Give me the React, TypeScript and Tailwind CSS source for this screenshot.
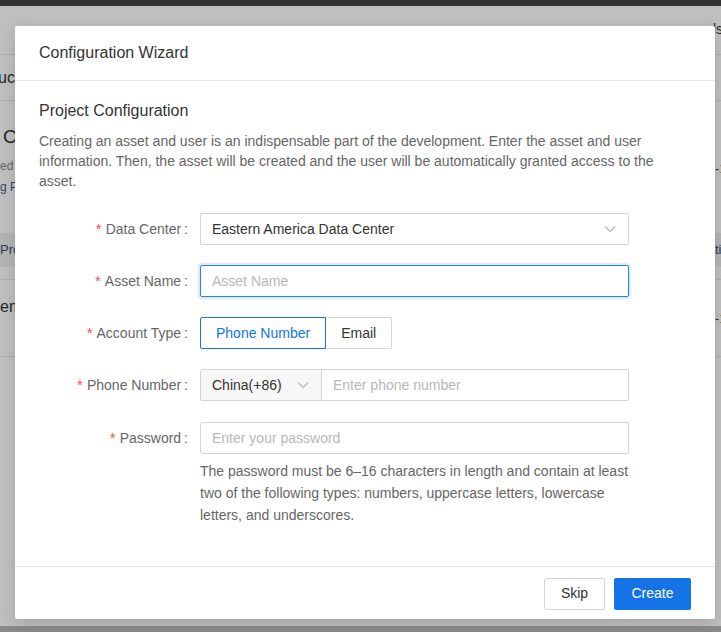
import React from "react";

const FONT = { fontFamily: '"Liberation Sans", Arial, sans-serif' };

function Chevron({ className = "" }: { className?: string }) {
  return (
    <svg width="12" height="8" viewBox="0 0 12 8" className={className} fill="none">
      <path d="M1 1.5l5 5 5-5" stroke="#b3b3b3" strokeWidth="1.1" />
    </svg>
  );
}

function Label({ text }: { text: string }) {
  return (
    <div className="w-[149px] shrink-0 mr-[12px] h-[32px] flex items-center justify-end text-[14px] text-[#666]">
      <span className="text-[#f54e4e] mr-[4px] text-[15px]">*</span>
      <span>{text}</span>
      <span className="ml-[3px]">:</span>
    </div>
  );
}

function BackgroundPage() {
  return (
    <div className="h-[632px] bg-white flex flex-col text-[#333]">
      <div className="h-[6px] bg-[#444]" />
      {/* toolbar row */}
      <div className="h-[49px] flex items-center border-b border-[#e8e8e8]">
        <div className="ml-auto w-[8px] whitespace-nowrap text-[14px] mt-[-2px]">ls</div>
      </div>
      <div className="h-[46px] flex items-center border-b border-[#e8e8e8]">
        <div className="whitespace-nowrap text-[16px] ml-[-2px]">ucts</div>
      </div>
      {/* card */}
      <div className="h-[179px] flex border-b border-[#e8e8e8]">
        <div className="flex flex-col">
          <div className="text-[19px] pl-[3px] mt-[24px] leading-[24px]">Cloud</div>
          <div className="text-[12px] text-[#888] mt-[7px] leading-[20px]">ed on</div>
          <div className="text-[12px] text-[#4a5a8a] leading-[22px]">g Pro</div>
          <div className="mt-auto mb-[12px] h-[34px] w-[22px] bg-[#f0f0f0] flex items-center text-[13px] text-[#3b4f7a] whitespace-nowrap overflow-visible">
            Products
          </div>
        </div>
        <div className="ml-auto flex flex-col w-[6px]">
          <div className="mt-[59px] text-[12px] whitespace-nowrap">
            -<span className="text-[#e0b030]">1</span>
          </div>
          <div className="mt-auto mb-[12px] h-[34px] bg-[#f0f0f0] flex items-center text-[13px] text-[#3b4f7a] whitespace-nowrap">
            tion
          </div>
        </div>
      </div>
      <div className="h-[77px] flex border-b border-[#e8e8e8]">
        <div className="text-[16px] mt-[15px] whitespace-nowrap">ems</div>
        <div className="ml-auto w-[6px] mt-[30px] text-[12px] whitespace-nowrap">
          -<span className="text-[#e0b030]">1</span>
        </div>
      </div>
      <div className="flex-1" />
      <div className="h-[6px] bg-[#b8b8b8]" />
    </div>
  );
}

export default function App() {
  return (
    <div className="relative w-[721px] h-[632px] overflow-hidden" style={FONT}>
      <BackgroundPage />
      <div className="absolute inset-0 bg-black/25" />

      <div className="absolute left-[15px] top-[26px] w-[700px] h-[593px] bg-white rounded-[2px] shadow-[0_4px_16px_rgba(0,0,0,0.15)] flex flex-col">
        <div className="h-[55px] px-[24px] flex items-center border-b border-[#e5e5e5] text-[16px] text-[#333]">
          Configuration Wizard
        </div>

        <div className="flex-1 px-[24px] pt-[18px]">
          <div className="text-[16px] leading-[24px] text-[#333]">Project Configuration</div>
          <p className="mt-[8px] text-[14px] leading-[20px] text-[#666]">
            Creating an asset and user is an indispensable part of the development. Enter the asset and user
            information. Then, the asset will be created and the user will be automatically granted access to the
            asset.
          </p>

          <div className="mt-[22px] flex flex-col">
            <div className="flex">
              <Label text="Data Center" />
              <div className="w-[429px] h-[32px] border border-[#d4d4d4] rounded-[2px] flex items-center pl-[11px] pr-[12px] text-[14px] text-[#333]">
                <span>Eastern America Data Center</span>
                <Chevron className="ml-auto" />
              </div>
            </div>

            <div className="flex mt-[20px]">
              <Label text="Asset Name" />
              <div className="w-[429px] h-[32px] border border-[#2b80e8] rounded-[2px] shadow-[0_0_0_2px_rgba(20,115,230,0.15)] flex items-center px-[11px] text-[14px] text-[#b8b8b8]">
                Asset Name
              </div>
            </div>

            <div className="flex mt-[20px]">
              <Label text="Account Type" />
              <div className="flex h-[32px] text-[14px]">
                <div className="h-[32px] px-[15px] flex items-center border border-[#1473e6] text-[#1473e6] rounded-l-[2px] relative z-10">
                  Phone Number
                </div>
                <div className="h-[32px] px-[15px] flex items-center border border-[#d4d4d4] border-l-0 text-[#333] rounded-r-[2px]">
                  Email
                </div>
              </div>
            </div>

            <div className="flex mt-[20px]">
              <Label text="Phone Number" />
              <div className="w-[429px] h-[32px] border border-[#d4d4d4] rounded-[2px] flex text-[14px]">
                <div className="w-[121px] bg-[#f7f7f7] border-r border-[#d4d4d4] flex items-center pl-[11px] pr-[12px] text-[#333]">
                  <span>China(+86)</span>
                  <Chevron className="ml-auto" />
                </div>
                <div className="flex items-center pl-[11px] text-[#b8b8b8]">Enter phone number</div>
              </div>
            </div>

            <div className="flex mt-[21px]">
              <Label text="Password" />
              <div className="w-[429px]">
                <div className="h-[32px] border border-[#d4d4d4] rounded-[2px] flex items-center px-[11px] text-[14px] text-[#b8b8b8]">
                  Enter your password
                </div>
                <p className="mt-[6px] text-[14px] leading-[22px] text-[#666]">
                  The password must be 6–16 characters in length and contain at least two of the following types:
                  numbers, uppercase letters, lowercase letters, and underscores.
                </p>
              </div>
            </div>
          </div>
        </div>

        <div className="h-[53px] border-t border-[#e5e5e5] flex items-center justify-end gap-[9px] px-[24px] pt-[1px]">
          <button className="h-[32px] w-[61px] border border-[#d4d4d4] rounded-[2px] bg-white text-[14px] text-[#333]">
            Skip
          </button>
          <button className="h-[32px] w-[77px] rounded-[2px] bg-[#1473e6] text-[14px] text-white">
            Create
          </button>
        </div>
      </div>
    </div>
  );
}
